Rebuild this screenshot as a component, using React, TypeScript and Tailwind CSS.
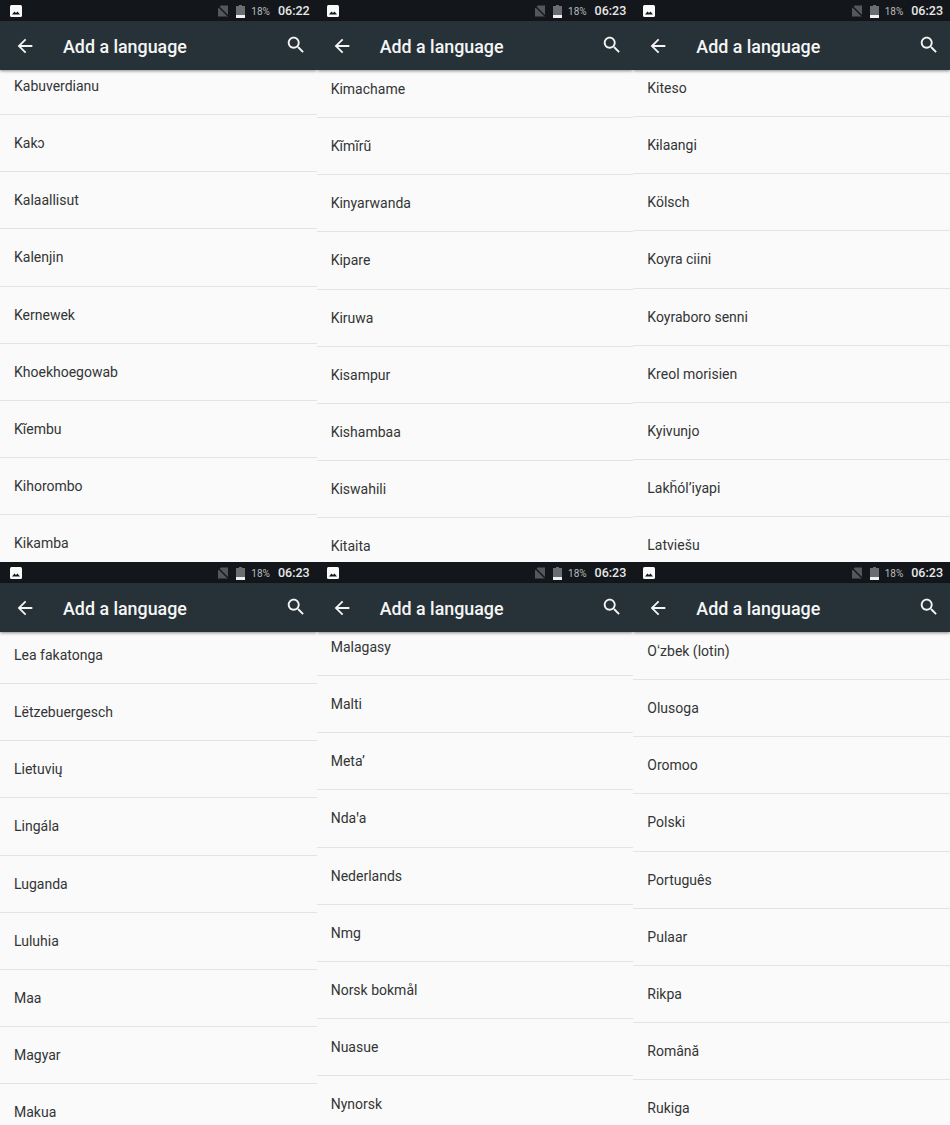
import React from 'react';

const screens = [
  {
    time: '06:22',
    offset: '-mt-[12px]',
    items: ['Kabuverdianu', 'Kakɔ', 'Kalaallisut', 'Kalenjin', 'Kernewek', 'Khoekhoegowab', 'Kĩembu', 'Kihorombo', 'Kikamba'],
  },
  {
    time: '06:23',
    offset: '-mt-[9px]',
    items: ['Kimachame', 'Kĩmĩrũ', 'Kinyarwanda', 'Kipare', 'Kiruwa', 'Kisampur', 'Kishambaa', 'Kiswahili', 'Kitaita'],
  },
  {
    time: '06:23',
    offset: '-mt-[10px]',
    items: ['Kiteso', 'Kɨlaangi', 'Kölsch', 'Koyra ciini', 'Koyraboro senni', 'Kreol morisien', 'Kyivunjo', 'Lakȟólʼiyapi', 'Latviešu'],
  },
  {
    time: '06:23',
    offset: '-mt-[5px]',
    items: ['Lea fakatonga', 'Lëtzebuergesch', 'Lietuvių', 'Lingála', 'Luganda', 'Luluhia', 'Maa', 'Magyar', 'Makua'],
  },
  {
    time: '06:23',
    offset: '-mt-[13px]',
    items: ['Malagasy', 'Malti', 'Metaʼ', 'Ndaꞌa', 'Nederlands', 'Nmg', 'Norsk bokmål', 'Nuasue', 'Nynorsk'],
  },
  {
    time: '06:23',
    offset: '-mt-[9px]',
    items: ['Oʻzbek (lotin)', 'Olusoga', 'Oromoo', 'Polski', 'Português', 'Pulaar', 'Rikpa', 'Română', 'Rukiga'],
  },
];

const StatusBar = ({time}: {time: string}) => (
  <div className="h-[21px] shrink-0 flex items-center pl-[10px] pr-[7px] bg-[#13161a]">
    <svg width="12" height="12" viewBox="0 0 12 12">
      <rect width="12" height="12" rx="1.5" fill="#fafafa" />
      <path d="M2 9.5 4.5 6.5 6 8 7.5 6.5 10 9.5z" fill="#13161a" />
    </svg>
    <div className="ml-auto flex items-center pt-[1px]">
      <svg width="10" height="12" viewBox="0 0 11 12">
        <path d="M3 0h8v12H0V3z" fill="#55585a" />
        <path d="M0 .5 11 11.5" stroke="#13161a" strokeWidth="1.5" />
      </svg>
      <svg width="9" height="13" viewBox="0 0 9 13" className="ml-[8px]">
        <path d="M3 0h3v1h3v12H0V1h3z" fill="#6b6e70" />
        <rect y="10" width="9" height="3" fill="#f2f2f2" />
      </svg>
      <span className="ml-[6px] text-[10px] text-[#b9bbbc]">18%</span>
      <span className="ml-[8px] text-[12.5px] font-medium text-[#e8e8e8]">{time}</span>
    </div>
  </div>
);

const AppBar = () => (
  <div className="relative h-[49px] shrink-0 flex items-center bg-[#263238] shadow-[0_1px_3px_rgba(0,0,0,0.45)]">
    <svg width="22" height="22" viewBox="0 0 24 24" fill="#f5f5f5" className="ml-[14px]">
      <path d="M20 11H7.83l5.59-5.59L12 4l-8 8 8 8 1.41-1.41L7.83 13H20v-2z" />
    </svg>
    <span className="ml-[27px] pt-[3px] text-[17.85px] font-medium text-[#f5f6f6]">Add a language</span>
    <svg width="22" height="22" viewBox="0 0 24 24" fill="#f5f5f5" className="ml-auto mr-[10px] -mt-[2px]">
      <path d="M15.5 14h-.79l-.28-.27C15.41 12.59 16 11.11 16 9.5 16 5.91 13.09 3 9.5 3S3 5.91 3 9.5 5.91 16 9.5 16c1.61 0 3.09-.59 4.23-1.57l.27.28v.79l5 4.99L20.49 19l-4.99-5zm-6 0C7.01 14 5 11.99 5 9.5S7.01 5 9.5 5 14 7.01 14 9.5 11.99 14 9.5 14z" />
    </svg>
  </div>
);

const App = () => {
  return (
    <div className="w-[950px] h-[1125px] grid grid-cols-3 grid-rows-[562px_563px] overflow-hidden bg-[#fafafa] font-['Roboto',sans-serif]">
      {screens.map((screen, i) => (
        <div key={i} className="flex flex-col min-w-0 overflow-hidden">
          <StatusBar time={screen.time} />
          <AppBar />
          <div className={`flex-1 ${screen.offset}`}>
            {screen.items.map(item => (
              <div
                key={item}
                className="h-[57.14px] flex items-center pl-[14px] pt-[1px] border-b border-[#e4e4e4] text-[14px] text-[#333535]"
              >
                {item}
              </div>
            ))}
          </div>
        </div>
      ))}
    </div>
  );
};

export default App;
